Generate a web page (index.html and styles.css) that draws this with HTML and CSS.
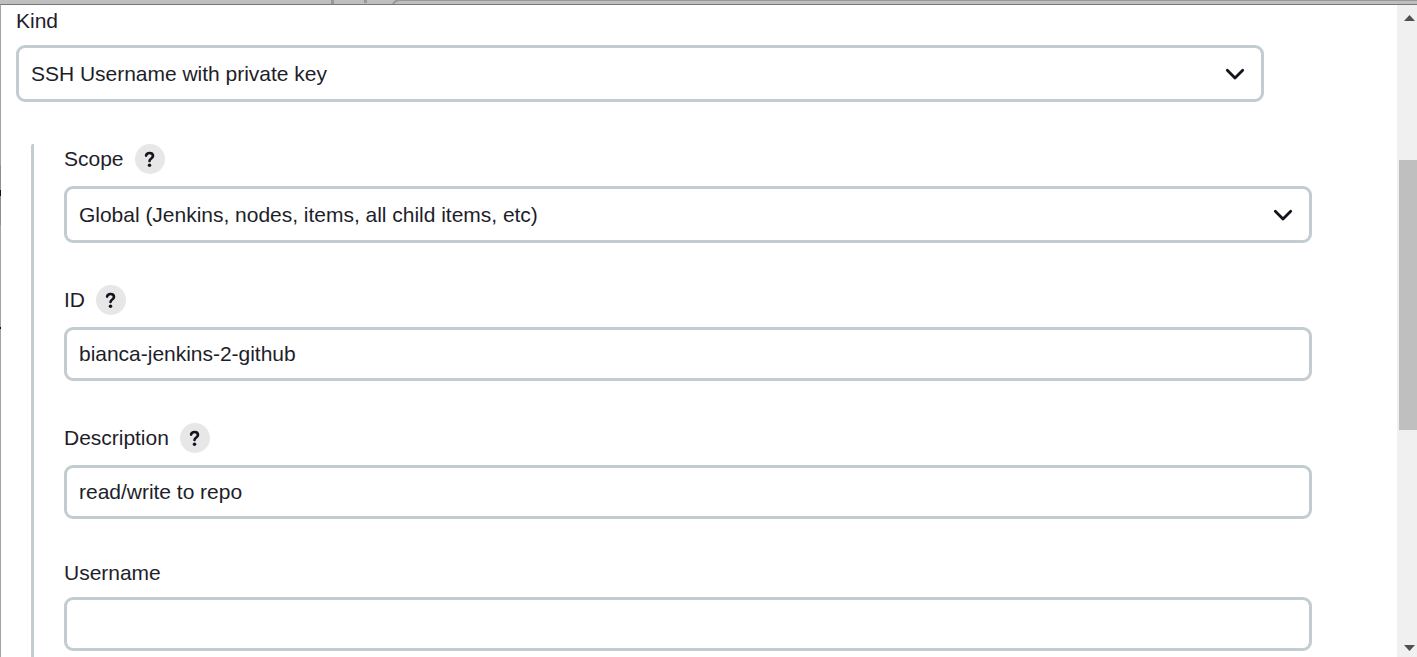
FILE: index.html
```
<!DOCTYPE html>
<html lang="en">
<head>
<meta charset="utf-8">
<title>Add Credentials</title>
<link rel="stylesheet" href="styles.css">
</head>
<body>
<div class="backdrop">
  <span class="backdrop-rule rule-a"></span>
  <span class="backdrop-rule rule-b"></span>
  <span class="backdrop-panel"></span>
</div>
<main class="dialog">
  <span class="edge-mark mark-soft"></span>
  <span class="edge-mark mark-top"></span>
  <span class="edge-mark mark-bottom"></span>
  <form class="form">
    <div class="label kind-label"><span>Kind</span></div>
    <div class="control select">
      <span>SSH Username with private key</span>
      <svg class="chevron" viewBox="0 0 20 12"><path d="M2.300 2.200l7.700 7.800l7.700-7.800"/></svg>
    </div>
    <section class="nested">
      <div class="field">
        <div class="label"><span>Scope</span><span class="help"><svg viewBox="0 0 30 30"><path d="M11.100 11.600c.3-1.700 1.700-2.600 3.400-2.600c2.100 0 3.500 1.200 3.500 3c0 2.500-3.500 2.400-3.500 5"/><circle cx="14.500" cy="21.200" r="1.750"/></svg></span></div>
        <div class="control select">
          <span>Global (Jenkins, nodes, items, all child items, etc)</span>
          <svg class="chevron" viewBox="0 0 20 12"><path d="M2.300 2.200l7.700 7.800l7.700-7.800"/></svg>
        </div>
      </div>
      <div class="field">
        <div class="label"><span>ID</span><span class="help"><svg viewBox="0 0 30 30"><path d="M11.100 11.600c.3-1.700 1.700-2.600 3.400-2.600c2.100 0 3.500 1.200 3.500 3c0 2.500-3.500 2.400-3.500 5"/><circle cx="14.500" cy="21.200" r="1.750"/></svg></span></div>
        <div class="control"><span>bianca-jenkins-2-github</span></div>
      </div>
      <div class="field">
        <div class="label"><span>Description</span><span class="help"><svg viewBox="0 0 30 30"><path d="M11.100 11.600c.3-1.700 1.700-2.600 3.400-2.600c2.100 0 3.500 1.200 3.500 3c0 2.500-3.500 2.400-3.500 5"/><circle cx="14.500" cy="21.200" r="1.750"/></svg></span></div>
        <div class="control"><span>read/write to repo</span></div>
      </div>
      <div class="field">
        <div class="label plain"><span>Username</span></div>
        <div class="control"></div>
      </div>
    </section>
  </form>
  <div class="scrollbar">
    <svg class="arrow" viewBox="0 0 11 6"><path d="M0 6L5.500 0L11 6z"/></svg>
    <div class="thumb"></div>
    <svg class="arrow arrow-down" viewBox="0 0 11 6"><path d="M0 0L5.500 6L11 0z"/></svg>
  </div>
</main>
</body>
</html>
```
FILE: styles.css
```
* { box-sizing: border-box; }

body {
  margin: 0;
  height: 657px;
  overflow: hidden;
  display: flex;
  flex-direction: column;
  background: #fff;
  color: #1e1e2a;
  font: 21px/24px "Liberation Sans", Arial, sans-serif;
  letter-spacing: -0.02px;
}

.backdrop {
  position: relative;
  flex: 0 0 4px;
  overflow: hidden;
  background: #bfbfbf;
}

.backdrop-rule {
  position: absolute;
  top: 0;
  width: 3px;
  height: 4px;
  background: #929a9e;
}

.rule-a { left: 331px; }
.rule-b { left: 364px; height: 3px; }

.backdrop-panel {
  position: absolute;
  left: 391px;
  right: -20px;
  top: -1px;
  height: 30px;
  border: 2px solid #929a9e;
  border-radius: 9px;
}

.dialog {
  position: relative;
  flex: 1;
  min-height: 0;
  display: flex;
  border-top: 1px solid #777;
  border-left: 1px solid #a3a3a3;
  background: #fff;
}

.edge-mark {
  position: absolute;
  left: -1px;
  width: 1px;
  background: #111;
}

.mark-soft { top: 160px; height: 60px; background: #8d8d96; }
.mark-top { top: 185px; height: 6px; }
.mark-bottom { top: 322px; height: 2px; }

.form {
  flex: 1;
  overflow: hidden;
  padding: 4px 0 0 15px;
}

.label {
  display: flex;
  align-items: center;
  gap: 11.400px;
  height: 30px;
  margin-bottom: 12px;
}

.kind-label,
.plain { height: 24px; }

.control {
  display: flex;
  align-items: center;
  justify-content: space-between;
  width: 1248px;
  height: 54px;
  padding: 0 16px 1px 12px;
  border: 3px solid #c3ccd1;
  border-radius: 9px;
  background: #fff;
}

.select { height: 57px; padding-bottom: 0; }

.chevron { width: 20px; height: 12px; }

.chevron path {
  fill: none;
  stroke: #14141f;
  stroke-width: 2.8;
  stroke-linecap: round;
  stroke-linejoin: round;
}

.nested {
  display: flex;
  flex-direction: column;
  gap: 42px;
  height: 560px;
  margin: 42px 0 0 15px;
  border-left: 3px solid #c3ccd1;
  border-top-left-radius: 2px;
  padding-left: 30px;
}

.help {
  width: 30px;
  height: 30px;
  border-radius: 50%;
  background: #e7e7e7;
}

.help svg { display: block; }

.help path {
  fill: none;
  stroke: #14141f;
  stroke-width: 2.6;
  stroke-linecap: round;
}

.help circle { fill: #14141f; }

.scrollbar {
  display: flex;
  flex-direction: column;
  width: 20px;
  padding: 10px 0 6px 2px;
  background: #f0f0f0;
}

.arrow {
  width: 11px;
  height: 6px;
  margin-left: 5px;
  fill: #505050;
}

.thumb {
  height: 270px;
  margin-top: 139px;
  background: #bfbfbf;
}

.arrow-down { margin-top: auto; }
```
